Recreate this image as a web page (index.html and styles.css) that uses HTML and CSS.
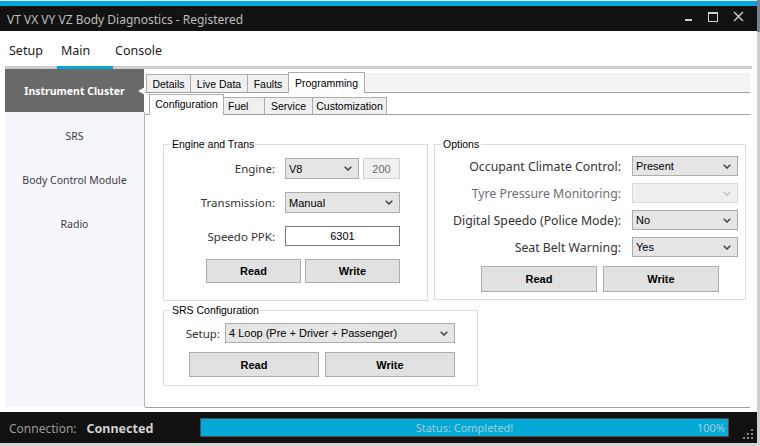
FILE: index.html
```html
<!DOCTYPE html>
<html>
<head>
<meta charset="utf-8">
<title>VT VX VY VZ Body Diagnostics</title>
<link rel="stylesheet" href="styles.css">
</head>
<body>
<div class="app">
  <div class="accent"></div>
  <header class="titlebar">
    <span class="title">VT VX VY VZ Body Diagnostics - Registered</span>
    <svg class="winctl" width="70" height="25" viewBox="0 0 70 25">
      <rect x="8" y="13" width="7" height="2" fill="#d0d0d0"/>
      <rect x="31.5" y="6.5" width="9" height="9" fill="none" stroke="#d0d0d0" stroke-width="1"/>
      <rect x="31" y="6" width="10" height="2" fill="#d0d0d0"/>
      <path d="M57 6 L66 15 M66 6 L57 15" stroke="#d0d0d0" stroke-width="1.4" fill="none"/>
    </svg>
  </header>
  <nav class="menubar">
    <span class="menu-item w-setup">Setup</span>
    <span class="menu-item w-main">Main</span>
    <span class="menu-item w-console">Console</span>
  </nav>
  <div class="menuline"><div class="menuline-active"></div></div>
  <div class="main">
    <aside class="sidebar">
      <div class="side-item selected">Instrument Cluster</div>
      <div class="side-list">
        <div class="side-item">SRS</div>
        <div class="side-item">Body Control Module</div>
        <div class="side-item">Radio</div>
      </div>
    </aside>
    <section class="content">
      <div class="tabs1">
        <div class="tab1 w-details">Details</div>
        <div class="tab1 w-live">Live Data</div>
        <div class="tab1 w-faults">Faults</div>
        <div class="tab1 w-prog active">Programming</div>
        <div class="tabs1-fill"></div>
      </div>
      <div class="tabs2">
        <div class="tab2 w-config active">Configuration</div>
        <div class="tab2 w-fuel">Fuel</div>
        <div class="tab2 w-service">Service</div>
        <div class="tab2 w-custom">Customization</div>
      </div>
      <div class="page">
        <div class="top-row">
          <fieldset class="group g-engine">
            <legend>Engine and Trans</legend>
            <div class="form-grid eng-grid">
              <span class="lbl">Engine:</span>
              <div class="ctl-pair">
                <div class="select s-engine"><span>V8</span><svg width="8" height="5" viewBox="0 0 8 5"><polyline points="0.7,0.7 4,4 7.3,0.7" fill="none" stroke="#4a4a4a" stroke-width="1.6"/></svg></div>
                <div class="textbox readonly">200</div>
              </div>
              <span class="lbl">Transmission:</span>
              <div class="select"><span>Manual</span><svg width="8" height="5" viewBox="0 0 8 5"><polyline points="0.7,0.7 4,4 7.3,0.7" fill="none" stroke="#4a4a4a" stroke-width="1.6"/></svg></div>
              <span class="lbl">Speedo PPK:</span>
              <div class="textbox">6301</div>
            </div>
            <div class="btn-row eng-btns">
              <button class="btn">Read</button>
              <button class="btn">Write</button>
            </div>
          </fieldset>
          <fieldset class="group g-options">
            <legend>Options</legend>
            <div class="form-grid opt-grid">
              <span class="lbl">Occupant Climate Control:</span>
              <div class="select"><span>Present</span><svg width="8" height="5" viewBox="0 0 8 5"><polyline points="0.7,0.7 4,4 7.3,0.7" fill="none" stroke="#4a4a4a" stroke-width="1.6"/></svg></div>
              <span class="lbl disabled">Tyre Pressure Monitoring:</span>
              <div class="select disabled"><span></span><svg width="8" height="5" viewBox="0 0 8 5"><polyline points="0.7,0.7 4,4 7.3,0.7" fill="none" stroke="#c4c4c4" stroke-width="1.6"/></svg></div>
              <span class="lbl">Digital Speedo (Police Mode):</span>
              <div class="select"><span>No</span><svg width="8" height="5" viewBox="0 0 8 5"><polyline points="0.7,0.7 4,4 7.3,0.7" fill="none" stroke="#4a4a4a" stroke-width="1.6"/></svg></div>
              <span class="lbl">Seat Belt Warning:</span>
              <div class="select"><span>Yes</span><svg width="8" height="5" viewBox="0 0 8 5"><polyline points="0.7,0.7 4,4 7.3,0.7" fill="none" stroke="#4a4a4a" stroke-width="1.6"/></svg></div>
            </div>
            <div class="btn-row opt-btns">
              <button class="btn">Read</button>
              <button class="btn">Write</button>
            </div>
          </fieldset>
        </div>
        <fieldset class="group g-srs">
          <legend>SRS Configuration</legend>
          <div class="form-grid srs-grid">
            <span class="lbl">Setup:</span>
            <div class="select"><span>4 Loop (Pre + Driver + Passenger)</span><svg width="8" height="5" viewBox="0 0 8 5"><polyline points="0.7,0.7 4,4 7.3,0.7" fill="none" stroke="#4a4a4a" stroke-width="1.6"/></svg></div>
          </div>
          <div class="btn-row srs-btns">
            <button class="btn">Read</button>
            <button class="btn">Write</button>
          </div>
        </fieldset>
      </div>
    </section>
  </div>
  <div class="status-gap"></div>
  <footer class="statusbar">
    <div class="conn"><span class="conn-label">Connection:</span><span class="conn-value">Connected</span></div>
    <div class="progress">
      <span></span>
      <span class="progress-text">Status: Completed!</span>
      <span class="progress-pct">100%</span>
    </div>
    <svg class="grip" width="12" height="12" viewBox="0 0 12 12">
      <rect x="9" y="1" width="2" height="2" fill="#8a8a8a"/>
      <rect x="5" y="5" width="2" height="2" fill="#8a8a8a"/>
      <rect x="9" y="5" width="2" height="2" fill="#8a8a8a"/>
      <rect x="1" y="9" width="2" height="2" fill="#8a8a8a"/>
      <rect x="5" y="9" width="2" height="2" fill="#8a8a8a"/>
      <rect x="9" y="9" width="2" height="2" fill="#8a8a8a"/>
    </svg>
  </footer>
</div>
<div class="desk"><div class="desk-top"></div><div class="desk-rest"></div></div>
</body>
</html>
```
FILE: styles.css
```css
* { box-sizing: border-box; }
html, body { margin: 0; padding: 0; }
body {
  width: 760px;
  height: 446px;
  overflow: hidden;
  background: #d4d4d4;
  display: flex;
  align-items: flex-start;
  font-family: "Liberation Sans", Arial, sans-serif;
}
.app {
  width: 757px;
  height: 443px;
  display: flex;
  flex-direction: column;
  background: #fff;
  border-top: 1px solid #e8e8e8;
  flex: none;
}
.desk { width: 3px; height: 446px; display: flex; flex-direction: column; }
.desk-top { height: 32px; background: #76838f; }
.desk-rest { flex: 1; background: #d0d0d0; }

.accent { height: 5px; background: #03a9d6; flex: none; }
.titlebar {
  height: 25px;
  flex: none;
  background: #121212;
  display: flex;
  align-items: center;
  padding: 1px 0 0 7px;
}
.title { font-family: "Noto Sans", sans-serif; font-size: 12px; color: #bdbdbd; white-space: nowrap; }
.winctl { margin-left: auto; margin-right: 10px; align-self: flex-start; margin-top: -1px; }

.menubar {
  height: 35px;
  flex: none;
  display: flex;
  align-items: center;
  padding: 4px 0 0 5px;
  font-family: "Noto Sans", sans-serif;
  font-size: 12.5px;
  color: #1a1a1a;
}
.menu-item { padding-left: 4px; }
.w-setup { width: 52px; }
.w-main { width: 56px; }
.w-console { padding-left: 2px; }
.menuline { height: 3px; flex: none; margin: 0 5px; background: #cdcdcd; display: flex; }
.menuline-active { margin-left: 52px; width: 56px; background: #03a9d6; }

.main { height: 339px; flex: none; display: flex; padding: 0 7px 0 5px; }
.sidebar {
  width: 140px;
  height: 338px;
  display: flex;
  flex-direction: column;
  font-family: "Noto Sans", sans-serif;
  font-size: 10.5px;
  color: #3c3c48;
}
.side-item {
  height: 44px;
  padding-top: 4px;
  display: flex;
  align-items: center;
  justify-content: center;
  white-space: nowrap;
}
.side-item.selected {
  height: 43px;
  width: 139px;
  padding-top: 0;
  background: #696969;
  color: #fff;
  font-weight: bold;
  position: relative;
  flex: none;
}
.side-item.selected::after {
  content: "";
  position: absolute;
  right: -1px;
  top: 18px;
  width: 0;
  height: 0;
  border-top: 4px solid transparent;
  border-bottom: 4px solid transparent;
  border-right: 7px solid #fff;
}
.side-list { flex: 1; background: #f5f7fb; border-right: 1px solid #a9b9d1; }

.content {
  width: 605px;
  height: 339px;
  border-bottom: 1px solid #a0a0a0;
  display: flex;
  flex-direction: column;
  font-size: 10.5px;
  color: #000;
}
.tabs1 {
  margin-top: 3px;
  height: 21px;
  flex: none;
  display: flex;
  align-items: flex-end;
  border-bottom: 1px solid #a0a0a0;
  padding-left: 1px;
}
.tab1 {
  height: 18px;
  border: 1px solid #acacac;
  border-bottom: none;
  background: #f0f0f0;
  display: flex;
  align-items: center;
  justify-content: center;
  margin-left: -1px;
  white-space: nowrap;
}
.tab1:first-child { margin-left: 0; }
.tab1.active { height: 21px; margin-bottom: -1px; background: #fff; position: relative; z-index: 1; padding-bottom: 1px; }
.w-details { width: 45px; }
.w-live { width: 58px; }
.w-faults { width: 42px; }
.w-prog { width: 77px; }
.tabs1-fill { flex: 1; height: 19px; background: #f3f3f3; }

.tabs2 {
  height: 22px;
  flex: none;
  display: flex;
  align-items: flex-end;
  border-bottom: 1px solid #a0a0a0;
  padding-left: 4px;
}
.tab2 {
  height: 17px;
  border: 1px solid #acacac;
  border-bottom: none;
  background: #f0f0f0;
  display: flex;
  align-items: center;
  justify-content: center;
  margin-left: -1px;
  white-space: nowrap;
}
.tab2:first-child { margin-left: 0; }
.tab2.active { height: 21px; margin-bottom: -1px; background: #fff; position: relative; z-index: 1; padding-bottom: 2px; }
.w-config { width: 75px; }
.w-fuel { width: 42px; justify-content: flex-start; padding-left: 4px; }
.w-service { width: 49px; }
.w-custom { width: 75px; }

.page { flex: 1; padding: 23px 0 0 18px; }
.top-row { display: flex; gap: 6px; align-items: flex-start; }

fieldset.group { margin: 0; padding: 0; border: 1px solid #dcdcdc; min-width: 0; }
fieldset.group legend {
  margin-left: 6px;
  padding: 0 2px;
  font-size: 10.5px;
  line-height: 13px;
  color: #000;
}
fieldset.g-engine { width: 265px; height: 163px; }
fieldset.g-options { width: 312px; height: 162px; }
fieldset.g-srs { width: 315px; height: 82px; margin-top: 3px; }

.form-grid { display: grid; }
.lbl {
  justify-self: end;
  align-self: center;
  font-family: "Noto Sans", sans-serif;
  font-size: 11.5px;
  color: #333;
  white-space: nowrap;
}
.lbl.disabled { color: #6d6d6d; }
.eng-grid {
  margin-top: 7px;
  grid-template-columns: 111px 115px;
  grid-template-rows: 21px 21px 20px;
  column-gap: 10px;
  row-gap: 13px;
}
.opt-grid {
  margin-top: 5px;
  grid-template-columns: 186px 106px;
  grid-template-rows: 20px 20px 20px 20px;
  column-gap: 11px;
  row-gap: 7px;
}
.opt-grid .lbl { font-size: 12.3px; }
.srs-grid {
  margin-top: 6px;
  grid-template-columns: 56px 230px;
  grid-template-rows: 20px;
  column-gap: 5px;
}

.ctl-pair { display: flex; gap: 4px; }
.select {
  display: flex;
  align-items: center;
  justify-content: space-between;
  height: 100%;
  padding: 0 6px 0 3px;
  border: 1px solid #acacac;
  background: #e5e5e5;
  font-size: 11px;
  color: #000;
  white-space: nowrap;
}
.select svg { flex: none; }
.select.disabled { background: #efefef; border-color: #d9d9d9; }
.s-engine { width: 74px; }
.textbox {
  height: 100%;
  flex: 1;
  border: 1px solid #7a7a7a;
  background: #fff;
  font-size: 11px;
  color: #000;
  display: flex;
  align-items: center;
  justify-content: center;
}
.textbox.readonly { flex: none; width: 37px; background: #f0f0f0; border-color: #cfcfcf; color: #6d6d6d; }

.btn-row { display: flex; }
.btn {
  margin: 0;
  padding: 0;
  border: 1px solid #adadad;
  background: #e1e1e1;
  font-family: "Liberation Sans", Arial, sans-serif;
  font-size: 11px;
  font-weight: bold;
  color: #000;
}
.eng-btns { margin-top: 13px; padding-left: 42px; gap: 4px; }
.eng-btns .btn { width: 95px; height: 24px; }
.opt-btns { margin-top: 9px; padding-left: 46px; gap: 6px; }
.opt-btns .btn { width: 116px; height: 26px; }
.srs-btns { margin-top: 9px; padding-left: 25px; gap: 6px; }
.srs-btns .btn { width: 130px; height: 25px; }

.status-gap { height: 4px; flex: none; }
.statusbar {
  height: 31px;
  flex: none;
  background: #111;
  display: flex;
  align-items: center;
  padding-left: 9px;
  font-family: "Noto Sans", sans-serif;
  font-size: 12px;
}
.conn { width: 191px; display: flex; gap: 10px; padding-top: 2px; white-space: nowrap; }
.conn-label { color: #9a9a9a; }
.conn-value { color: #d2d2d2; font-weight: bold; font-size: 12.5px; }
.progress {
  width: 529px;
  height: 19px;
  border: 1px solid #4d4d4d;
  background: #03a9d6;
  display: grid;
  grid-template-columns: 1fr auto 1fr;
  align-items: center;
  font-size: 11px;
  color: #a3cddb;
}
.progress-pct { justify-self: end; padding-right: 3px; }
.grip { align-self: flex-end; margin: 0 0 3px 13px; }
```
